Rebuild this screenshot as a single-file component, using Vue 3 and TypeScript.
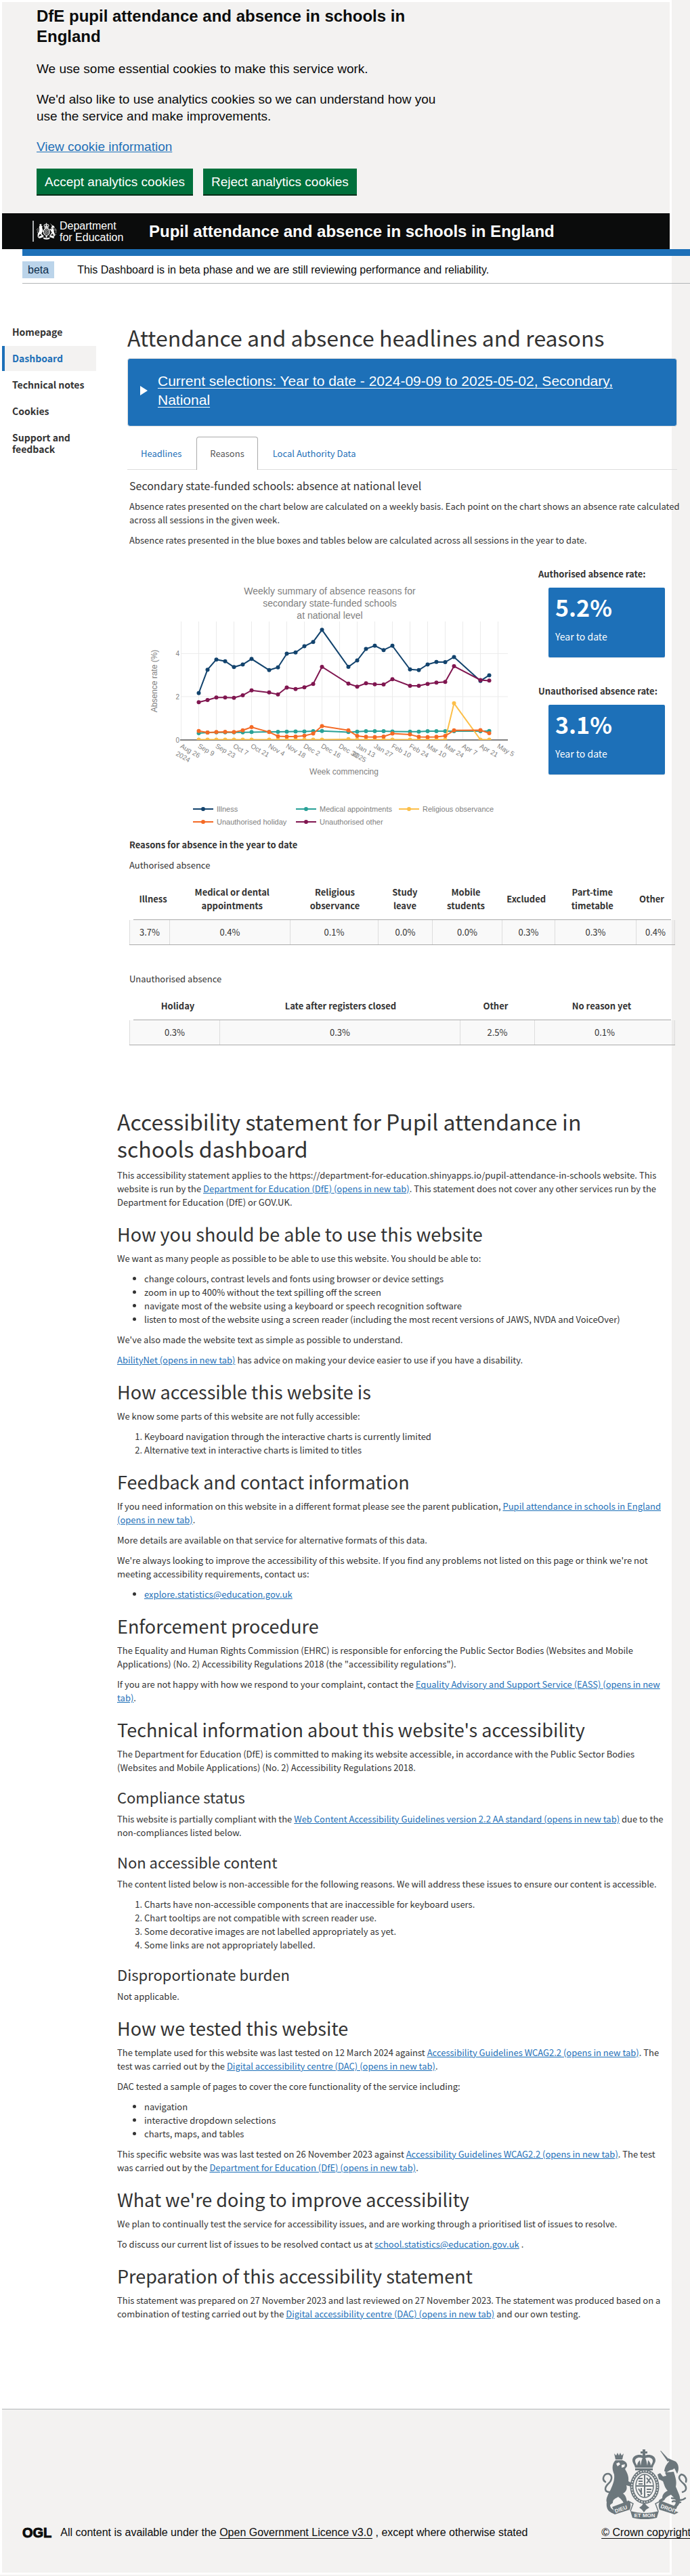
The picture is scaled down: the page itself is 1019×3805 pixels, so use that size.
<script setup lang="ts">
interface Series {
  name: string
  colour: string
  values: number[]
}

interface ReasonColumn {
  label: string
  value: string
}

const navItems = ['Homepage', 'Dashboard', 'Technical notes', 'Cookies', 'Support and feedback']

// Weeks counted from 26 August 2024; school holidays leave gaps.
const weeks = [2, 3, 4, 5, 6, 7, 8, 10, 11, 12, 13, 14, 15, 16, 19, 20, 21, 22, 23, 24, 26, 27, 28, 29, 30, 31, 34, 35]

const illness: Series = {
  name: 'Illness',
  colour: '#12436d',
  values: [2.16, 3.25, 3.72, 3.64, 3.37, 3.49, 3.75, 3.23, 3.36, 3.99, 4.05, 4.34, 4.54, 5.1, 3.38, 3.68, 4.21, 4.36, 4.16, 4.36, 3.26, 3.23, 3.49, 3.61, 3.6, 3.84, 2.73, 2.99],
}
const medical: Series = {
  name: 'Medical appointments',
  colour: '#28a197',
  values: [0.3, 0.33, 0.34, 0.34, 0.34, 0.34, 0.35, 0.36, 0.36, 0.37, 0.38, 0.38, 0.39, 0.4, 0.35, 0.37, 0.39, 0.39, 0.39, 0.38, 0.37, 0.37, 0.39, 0.39, 0.39, 0.39, 0.39, 0.4],
}
const religious: Series = {
  name: 'Religious observance',
  colour: '#fcbf49',
  values: [0, 0, 0, 0, 0, 0, 0, 0, 0, 0, 0, 0, 0, 0, 0.02, 0, 0, 0, 0, 0, 0, 0, 0, 0, 0, 1.69, 0, 0],
}
const holiday: Series = {
  name: 'Unauthorised holiday',
  colour: '#f46a25',
  values: [0.4, 0.33, 0.35, 0.36, 0.35, 0.43, 0.58, 0.35, 0.16, 0.14, 0.14, 0.18, 0.28, 0.63, 0.43, 0.17, 0.13, 0.12, 0.14, 0.28, 0.24, 0.13, 0.12, 0.13, 0.17, 0.43, 0.44, 0.3],
}
const other: Series = {
  name: 'Unauthorised other',
  colour: '#801650',
  values: [1.74, 1.84, 1.96, 1.96, 1.94, 2.06, 2.29, 2.19, 2.1, 2.42, 2.35, 2.43, 2.59, 3.38, 2.6, 2.46, 2.62, 2.57, 2.56, 2.81, 2.5, 2.5, 2.59, 2.65, 2.68, 3.41, 2.77, 2.74],
}
const series = [illness, medical, religious, holiday, other]

const ticks = ['Aug 26', 'Sep 9', 'Sep 23', 'Oct 7', 'Oct 21', 'Nov 4', 'Nov 18', 'Dec 2', 'Dec 16', 'Dec 30', 'Jan 13', 'Jan 27', 'Feb 10', 'Feb 24', 'Mar 10', 'Mar 24', 'Apr 7', 'Apr 21', 'May 5']
const tickYears: Record<string, string> = { 'Aug 26': '2024', 'Jan 13': '2025' }

const weekX = (week: number): number => 76.5 + week * 13
const rateY = (rate: number): number => 254.5 - rate * 31.8
const points = (s: Series): string => s.values.map((v, i) => `${weekX(weeks[i])},${rateY(v).toFixed(1)}`).join(' ')

const authorised: ReasonColumn[] = [
  { label: 'Illness', value: '3.7%' },
  { label: 'Medical or dental appointments', value: '0.4%' },
  { label: 'Religious observance', value: '0.1%' },
  { label: 'Study leave', value: '0.0%' },
  { label: 'Mobile students', value: '0.0%' },
  { label: 'Excluded', value: '0.3%' },
  { label: 'Part-time timetable', value: '0.3%' },
  { label: 'Other', value: '0.4%' },
]
const unauthorised: ReasonColumn[] = [
  { label: 'Holiday', value: '0.3%' },
  { label: 'Late after registers closed', value: '0.3%' },
  { label: 'Other', value: '2.5%' },
  { label: 'No reason yet', value: '0.1%' },
]
</script>

<template>
  <div class="page">
    <svg class="defs" aria-hidden="true">
      <symbol id="crest" viewBox="0 0 128 103">
        <g fill="currentColor" stroke="none">
          <!-- crown -->
          <path d="M60 0h4v3h3v3h-3v4h-4V6h-3V3h3z" />
          <path d="M62 10c5-4 17-2 17 6 0 4-3 6-4 11H49c-1-5-4-7-4-11 0-8 12-10 17-6zm-2 3c-4-2-11-1-11 4 0 3 2 5 3 7 0-4 2-6 4-8l1 8c1-4 1-8 3-11zm4 0c2 3 2 7 3 11l1-8c2 2 4 4 4 8 1-2 3-4 3-7 0-5-7-6-11-4z" fill-rule="evenodd" />
          <path d="M49 28h26v3H49z" />
          <!-- lion -->
          <path d="M18 6l3 3 2-4 2 4 2-4 2 4 3-3-2 9H20z" />
          <path d="M20 16h10c4 1 8 4 7 9l-3 4c3 5 6 11 5 18l5 3-1 5-7-2c2 6-1 10-5 12 4 3 5 7 6 12l5 1-1 4h-8c-2-6-5-9-9-12-4 3-8 3-8 9l-4 3c0 5 4 7 6 8l-2 4c-8-2-10-9-9-16-2-5 3-13 6-19 3-7 6-14 5-22-3-7-4-15 2-21z" />
          <path d="M21 21l4-2 2 3-4 3zm8 2l5-1-1 4-4 1z" class="crest-gap" />
          <!-- unicorn -->
          <path d="M86 2l1 0 13 14-3 2z" />
          <path d="M98 13l4 2 7 3c5 5 5 12 2 18l-4-8-3 2-4 1-5 3-3-2c1-7 4-11 7-14zM93 34l13-1c2 7 5 14 3 22l5 12c3 8 1 18-9 21l-1-3c5-3 6-7 4-12l-6-6c-5 2-8 4-10 8l-7 4-1-4 5-3c0-6 4-9 8-11-4-4-5-9-7-14l-6-3-2-7 4-2 4 5 5-1z" />
        </g>
        <g fill="none" stroke="currentColor" stroke-width="2.5" stroke-linecap="round">
          <path d="M5 48c-6-4-2-13 5-12 7 3 4 11-1 15-6 6-5 12 2 12M11 64c5-3 9-1 8 4" />
          <path d="M119 63c7-2 6-8 2-12-6-5-10-10-4-14M117 37c4 0 9 5 7 11M103 72l7 1M110 70c3 6 8 6 13 2M104 77c5-3 7 4 12 1" />
        </g>
        <g fill="none" stroke="currentColor">
          <ellipse cx="63" cy="55" rx="19" ry="23" stroke-width="5" />
          <ellipse cx="63" cy="55" rx="19" ry="23" stroke-width="1.6" stroke-dasharray="2 2" class="crest-line" />
          <ellipse cx="63" cy="54" rx="13" ry="17" stroke-width="1.5" />
          <path d="M63 37v34M50 54h26M54 43l6 0M54 47h6M54 51h6M66 42l6 8M72 42l-6 8M54 58l5 8M58 57v10M66 59h7M66 63h6M67 67h3" stroke-width="2" />
        </g>
        <g fill="currentColor">
          <path d="M15 85l24-9c4 3 4 8 2 13l-22 7-6-3 5-2z" />
          <path d="M111 85l-24-9c-4 3-4 8-2 13l22 7 6-3-5-2z" />
          <path d="M42 91c14 4 28 4 42 0l-3 10c-12 3-24 3-36 0z" />
          <path d="M62 78l4 5 4 3-5 3-3 4-3-4-4-3 4-3z" />
          <path d="M38 76l8 4-4 11M87 76l-8 4 4 11" fill="none" stroke="currentColor" stroke-width="1.5" />
        </g>
      </symbol>
    </svg>

    <section class="cookies" aria-label="Cookies">
      <div class="cookies-text">
        <h2>DfE pupil attendance and absence in schools in England</h2>
        <p>We use some essential cookies to make this service work.</p>
        <p>We'd also like to use analytics cookies so we can understand how you use the service and make improvements.</p>
        <p><a href="#cookies">View cookie information</a></p>
      </div>
      <div class="cookies-actions">
        <button type="button">Accept analytics cookies</button>
        <button type="button">Reject analytics cookies</button>
      </div>
    </section>

    <header class="masthead">
      <a class="logo" href="#home">
        <svg class="logo-crest" aria-hidden="true"><use href="#crest" /></svg>
        <span>Department<br>for Education</span>
      </a>
      <span class="service">Pupil attendance and absence in schools in England</span>
    </header>

    <div class="phase">
      <strong>beta</strong>
      <span>This Dashboard is in beta phase and we are still reviewing performance and reliability.</span>
    </div>

    <div class="layout">
      <nav class="sidebar" aria-label="Sections">
        <a v-for="item in navItems" :key="item" href="#" :class="{ current: item === 'Dashboard' }">{{ item }}</a>
      </nav>

      <main class="dashboard">
        <h1>Attendance and absence headlines and reasons</h1>
        <details class="selections">
          <summary>
            <svg width="11" height="14" viewBox="0 0 11 14" aria-hidden="true"><path d="M0 0l11 7-11 7z" fill="#fff" /></svg>
            <span>Current selections: Year to date - 2024-09-09 to 2025-05-02, Secondary, National</span>
          </summary>
        </details>

        <div class="tabs">
          <a href="#headlines">Headlines</a>
          <a href="#reasons" class="active">Reasons</a>
          <a href="#la">Local Authority Data</a>
        </div>

        <div class="panel">
          <h4>Secondary state-funded schools: absence at national level</h4>
          <p>Absence rates presented on the chart below are calculated on a weekly basis. Each point on the chart shows an absence rate calculated across all sessions in the given week.</p>
          <p>Absence rates presented in the blue boxes and tables below are calculated across all sessions in the year to date.</p>

          <div class="summary-row">
            <svg class="chart" width="600" height="390" viewBox="0 0 600 390" role="img" aria-label="Weekly summary of absence reasons">
              <defs>
                <clipPath id="plot"><rect x="70" y="80" width="495" height="175" /></clipPath>
              </defs>
              <g class="chart-title" text-anchor="middle">
                <text x="296" y="40">Weekly summary of absence reasons for</text>
                <text x="296" y="58">secondary state-funded schools</text>
                <text x="296" y="76">at national level</text>
              </g>
              <g class="gridlines">
                <line v-for="(t, i) in ticks" :key="t" :x1="weekX(i * 2)" :x2="weekX(i * 2)" y1="80" y2="254" />
                <line v-for="r in [2, 4]" :key="r" x1="76" x2="559" :y1="rateY(r) + 0.1" :y2="rateY(r) + 0.1" />
              </g>
              <line x1="75" x2="559" y1="255" y2="255" stroke="#808080" stroke-width="2" />
              <g clip-path="url(#plot)">
                <g v-for="s in series" :key="s.name" :fill="s.colour">
                  <polyline :points="points(s)" fill="none" :stroke="s.colour" stroke-width="2" />
                  <circle v-for="(v, i) in s.values" :key="i" :cx="weekX(weeks[i])" :cy="rateY(v)" r="3" />
                </g>
              </g>
              <g class="ticks">
                <text v-for="r in [0, 2, 4]" :key="r" x="74" :y="rateY(r) + 4" text-anchor="end">{{ r }}</text>
                <g v-for="(t, i) in ticks" :key="t" :transform="`translate(${weekX(i * 2) - 2} 266) rotate(30)`">
                  <text>{{ t }}</text>
                  <text v-if="tickYears[t]" y="13">{{ tickYears[t] }}</text>
                </g>
              </g>
              <g class="axis-titles" text-anchor="middle">
                <text x="317" y="306">Week commencing</text>
                <text transform="translate(41 168) rotate(-90)">Absence rate (%)</text>
              </g>
              <g v-for="(s, i) in series" :key="s.name" class="legend" :transform="`translate(${94 + (i % 3) * 152} ${357 + Math.floor(i / 3) * 19})`">
                <line x1="0" x2="30" y1="0" y2="0" :stroke="s.colour" stroke-width="2" />
                <circle cx="15" cy="0" r="3" :fill="s.colour" />
                <text x="35" y="4">{{ s.name }}</text>
              </g>
            </svg>

            <div class="rates">
              <h5>Authorised absence rate:</h5>
              <div class="value-box"><strong>5.2%</strong><span>Year to date</span></div>
              <h5>Unauthorised absence rate:</h5>
              <div class="value-box"><strong>3.1%</strong><span>Year to date</span></div>
            </div>
          </div>

          <h5>Reasons for absence in the year to date</h5>
          <p>Authorised absence</p>
          <table class="reasons authorised">
            <thead>
              <tr><th v-for="c in authorised" :key="c.label" scope="col">{{ c.label }}</th></tr>
            </thead>
            <tbody>
              <tr><td v-for="c in authorised" :key="c.label">{{ c.value }}</td></tr>
            </tbody>
          </table>
          <p>Unauthorised absence</p>
          <table class="reasons unauthorised">
            <thead>
              <tr><th v-for="c in unauthorised" :key="c.label" scope="col">{{ c.label }}</th></tr>
            </thead>
            <tbody>
              <tr><td v-for="c in unauthorised" :key="c.label">{{ c.value }}</td></tr>
            </tbody>
          </table>
        </div>
      </main>
    </div>

    <article class="statement">
      <h1>Accessibility statement for Pupil attendance in schools dashboard</h1>
      <p>This accessibility statement applies to the https://department-for-education.shinyapps.io/pupil-attendance-in-schools website. This website is run by the <a href="#">Department for Education (DfE) (opens in new tab)</a>. This statement does not cover any other services run by the Department for Education (DfE) or GOV.UK.</p>
      <h2>How you should be able to use this website</h2>
      <p>We want as many people as possible to be able to use this website. You should be able to:</p>
      <ul>
        <li>change colours, contrast levels and fonts using browser or device settings</li>
        <li>zoom in up to 400% without the text spilling off the screen</li>
        <li>navigate most of the website using a keyboard or speech recognition software</li>
        <li>listen to most of the website using a screen reader (including the most recent versions of JAWS, NVDA and VoiceOver)</li>
      </ul>
      <p>We've also made the website text as simple as possible to understand.</p>
      <p><a href="#">AbilityNet (opens in new tab)</a> has advice on making your device easier to use if you have a disability.</p>
      <h2>How accessible this website is</h2>
      <p>We know some parts of this website are not fully accessible:</p>
      <ol>
        <li>Keyboard navigation through the interactive charts is currently limited</li>
        <li>Alternative text in interactive charts is limited to titles</li>
      </ol>
      <h2>Feedback and contact information</h2>
      <p>If you need information on this website in a different format please see the parent publication, <a href="#">Pupil attendance in schools in England (opens in new tab)</a>.</p>
      <p>More details are available on that service for alternative formats of this data.</p>
      <p>We're always looking to improve the accessibility of this website. If you find any problems not listed on this page or think we're not meeting accessibility requirements, contact us:</p>
      <ul>
        <li><a href="#">explore.statistics@education.gov.uk</a></li>
      </ul>
      <h2>Enforcement procedure</h2>
      <p>The Equality and Human Rights Commission (EHRC) is responsible for enforcing the Public Sector Bodies (Websites and Mobile Applications) (No. 2) Accessibility Regulations 2018 (the "accessibility regulations").</p>
      <p>If you are not happy with how we respond to your complaint, contact the <a href="#">Equality Advisory and Support Service (EASS) (opens in new tab)</a>.</p>
      <h2>Technical information about this website's accessibility</h2>
      <p>The Department for Education (DfE) is committed to making its website accessible, in accordance with the Public Sector Bodies (Websites and Mobile Applications) (No. 2) Accessibility Regulations 2018.</p>
      <h3>Compliance status</h3>
      <p>This website is partially compliant with the <a href="#">Web Content Accessibility Guidelines version 2.2 AA standard (opens in new tab)</a> due to the non-compliances listed below.</p>
      <h3>Non accessible content</h3>
      <p>The content listed below is non-accessible for the following reasons. We will address these issues to ensure our content is accessible.</p>
      <ol>
        <li>Charts have non-accessible components that are inaccessible for keyboard users.</li>
        <li>Chart tooltips are not compatible with screen reader use.</li>
        <li>Some decorative images are not labelled appropriately as yet.</li>
        <li>Some links are not appropriately labelled.</li>
      </ol>
      <h3>Disproportionate burden</h3>
      <p>Not applicable.</p>
      <h2>How we tested this website</h2>
      <p>The template used for this website was last tested on 12 March 2024 against <a href="#">Accessibility Guidelines WCAG2.2 (opens in new tab)</a>. The test was carried out by the <a href="#">Digital accessibility centre (DAC) (opens in new tab)</a>.</p>
      <p>DAC tested a sample of pages to cover the core functionality of the service including:</p>
      <ul>
        <li>navigation</li>
        <li>interactive dropdown selections</li>
        <li>charts, maps, and tables</li>
      </ul>
      <p>This specific website was was last tested on 26 November 2023 against <a href="#">Accessibility Guidelines WCAG2.2 (opens in new tab)</a>. The test was carried out by the <a href="#">Department for Education (DfE) (opens in new tab)</a>.</p>
      <h2>What we're doing to improve accessibility</h2>
      <p>We plan to continually test the service for accessibility issues, and are working through a prioritised list of issues to resolve.</p>
      <p>To discuss our current list of issues to be resolved contact us at <a href="#">school.statistics@education.gov.uk</a> .</p>
      <h2>Preparation of this accessibility statement</h2>
      <p>This statement was prepared on 27 November 2023 and last reviewed on 27 November 2023. The statement was produced based on a combination of testing carried out by the <a href="#">Digital accessibility centre (DAC) (opens in new tab)</a> and our own testing.</p>
    </article>

    <footer class="footer">
      <div class="licence">
        <strong class="ogl">OGL</strong>
        <span>All content is available under the <a href="#">Open Government Licence v3.0</a> , except where otherwise stated</span>
      </div>
      <div class="copyright">
        <svg class="footer-crest" viewBox="0 0 128 103" aria-hidden="true">
          <use href="#crest" width="128" height="103" />
          <g class="crest-text">
            <text x="63" y="100" text-anchor="middle">ET MON</text>
            <text transform="translate(20 94) rotate(-20)">DIEU</text>
            <text transform="translate(86 86) rotate(20)">DROIT</text>
          </g>
        </svg>
        <a href="#">© Crown copyright</a>
      </div>
    </footer>
  </div>
</template>

<style>
html {
  background: #f3f2f1;
}
body {
  margin: 0;
  overflow-x: hidden;
}
</style>

<style scoped>
.page {
  --sans: "Noto Sans CJK SC", "Noto Sans", sans-serif;
  --arial: "Liberation Sans", Arial, sans-serif;
  margin-right: 27px;
  padding: 3px;
  background: #fff;
  color: #333;
  font: 13px/20px var(--sans);
}
.defs {
  position: absolute;
  width: 0;
  height: 0;
}
a {
  color: #1d70b8;
}
h1, h2, h3, h4, h5, p, ul, ol {
  margin: 0;
  font-weight: 400;
}

.cookies {
  padding: 6px 51px 26px;
  background: #f3f2f1;
  color: #0b0c0c;
  font: 19px/25px var(--arial);
}
.cookies-text {
  width: 68%;
}
.cookies h2 {
  font-size: 24px;
  line-height: 30px;
  font-weight: 700;
}
.cookies p {
  margin-top: 20px;
}
.cookies-actions {
  display: flex;
  gap: 15px;
  margin-top: 20px;
}
.cookies-actions button {
  height: 38px;
  margin: 0 0 2px;
  padding: 0 12px;
  border: 0;
  background: #00703c;
  box-shadow: 0 2px 0 #002d18;
  color: #fff;
  font: 19px/19px var(--arial);
}

.masthead {
  display: flex;
  align-items: center;
  min-height: 53px;
  background: #0b0c0c;
  color: #fff;
  font-family: var(--arial);
}
.logo {
  display: flex;
  align-items: center;
  gap: 4px;
  width: 172px;
  box-sizing: border-box;
  margin-left: 45px;
  color: #fff;
  font-size: 16px;
  line-height: 17px;
  text-decoration: none;
}
.logo-crest {
  width: 30px;
  height: 31px;
  padding-left: 4px;
  border-left: 2px solid #b1b4b6;
}
.service {
  font-size: 24px;
  line-height: 30px;
  font-weight: 700;
}

.phase {
  display: flex;
  align-items: center;
  gap: 34px;
  margin: 0 -30px 0 30px;
  padding: 8px 0 7px;
  border-top: 10px solid #1d70b8;
  border-bottom: 1px solid #b1b4b6;
  color: #0b0c0c;
  font: 16px/25px var(--arial);
}
.phase strong {
  padding: 0 8px;
  background: #bbd4ea;
  color: #0c2d4a;
  font-weight: 400;
}

.layout {
  display: flex;
  align-items: flex-start;
  margin-right: -11px;
}
.sidebar {
  display: flex;
  flex: 0 0 139px;
  flex-direction: column;
  gap: 2px;
  padding-top: 53px;
}
.sidebar a {
  padding: 10px 14px 10px 11px;
  border-left: 4px solid transparent;
  color: #333;
  font-size: 14px;
  line-height: 17px;
  font-weight: 700;
  text-decoration: none;
}
.sidebar .current {
  border-color: #1d70b8;
  background: #f3f2f1;
  color: #1d70b8;
}

.dashboard {
  flex: 1;
  min-width: 0;
  margin-left: 46px;
  padding-top: 59px;
}
.dashboard h1, .statement h1 {
  font-size: 32px;
  line-height: 40px;
}
.selections {
  margin-top: 11px;
  padding: 19px 19px 24px 18px;
  border: 1px solid #ddd;
  border-radius: 4px;
  background: #1d70b8;
}
.selections summary {
  display: flex;
  align-items: center;
  gap: 15px;
  color: #fff;
  font: 21px/28px var(--arial);
  text-decoration: underline;
  text-underline-offset: 3px;
  text-decoration-thickness: 1px;
  list-style: none;
}
.selections svg {
  flex: none;
}

.tabs {
  display: flex;
  gap: 2px;
  margin-top: 15px;
  border-bottom: 1px solid #ddd;
}
.tabs a {
  margin-bottom: -1px;
  padding: 14px 19px;
  border: 1px solid transparent;
  border-bottom: 0;
  text-decoration: none;
}
.tabs .active {
  border-color: #aaa;
  border-radius: 4px 4px 0 0;
  background: #fff;
  color: #555;
}

.panel {
  padding: 13px 3px 0;
}
.panel h4 {
  margin-bottom: 11px;
  font-size: 16px;
  line-height: 20px;
}
.panel h5 {
  font-size: 13px;
  line-height: 20px;
  font-weight: 700;
}
.panel p {
  margin: 0 -12px 10px 0;
}
.panel > h5 {
  margin: 10px 0;
}
.summary-row {
  display: grid;
  grid-template-columns: minmax(0, 1fr) 187px;
  margin-top: 30px;
  padding-right: 15px;
}
.chart {
  display: block;
  font-family: var(--arial);
}
.chart text {
  fill: #808080;
}
.chart-title {
  font-size: 14px;
}
.axis-titles {
  font-size: 12px;
}
.ticks {
  font-size: 10px;
}
.legend {
  font-size: 11px;
}
.gridlines line {
  stroke: #ebebeb;
}
.rates .value-box {
  display: flex;
  flex-direction: column;
  gap: 12px;
  margin: 10px 0 40px 15px;
  padding: 8px 10px 21px;
  border-radius: 2px;
  background: #1d70b8;
  color: #fff;
  box-shadow: 0 1px 1px rgba(0, 0, 0, 0.1);
}
.rates .value-box:last-child {
  margin-bottom: 0;
}
.value-box strong {
  font-size: 34px;
  line-height: 42px;
}
.value-box span {
  font-size: 14px;
  line-height: 20px;
}

/* The header row is inset from the body row by 6px on each side. */
.reasons {
  display: block;
  margin-bottom: 40px;
}
.reasons thead, .reasons tbody {
  display: block;
}
.reasons thead {
  margin: 0 6px;
  border-bottom: 1px solid #aaa;
}
.reasons tbody {
  border-bottom: 1px solid #aaa;
  background: rgba(0, 0, 0, 0.024);
}
.reasons tr {
  display: grid;
  align-items: center;
}
.authorised tr {
  grid-template-columns: 59fr 178fr 130fr 80fr 103fr 78fr 120fr 58fr;
}
.unauthorised tr {
  grid-template-columns: 133fr 355fr 110fr 208fr;
}
.reasons th {
  padding: 10px 2px;
  font-weight: 700;
}
.authorised th:nth-child(2) {
  padding: 10px 24px;
}
.authorised th:nth-child(3), .authorised th:nth-child(7) {
  padding: 10px 20px;
}
.authorised th:nth-child(4), .authorised th:nth-child(5) {
  padding: 10px 16px;
}
.reasons td {
  padding: 8px 0;
  border-left: 1px solid #ddd;
  text-align: center;
}
.reasons td:last-child {
  border-right: 1px solid #ddd;
}

.statement {
  margin: 52px 8px 0 170px;
  padding-bottom: 120px;
}
.statement h1, .statement p, .statement ul, .statement ol {
  margin-bottom: 10px;
}
.statement h1 {
  padding-right: 40px;
}
.statement h2 {
  margin: 20px 0 10px;
  font-size: 27px;
  line-height: 33px;
}
.statement h3 {
  margin: 20px 0 10px;
  font-size: 22px;
  line-height: 26px;
}
.statement ul, .statement ol {
  padding-left: 40px;
}

.footer {
  display: flex;
  align-items: flex-end;
  justify-content: space-between;
  padding: 59px 0 49px 30px;
  border-top: 1px solid #b1b4b6;
  background: #f3f2f1;
  color: #0b0c0c;
  font: 16px/20px var(--arial);
}
.footer a {
  color: #0b0c0c;
  text-underline-offset: 3px;
}
.licence {
  display: flex;
  align-items: center;
  gap: 13px;
}
.ogl {
  font-size: 20px;
  -webkit-text-stroke: 1px #0b0c0c;
}
.copyright {
  display: flex;
  flex-direction: column;
  flex: none;
  margin-right: -31px;
  gap: 10px;
  white-space: nowrap;
}
.footer-crest {
  width: 128px;
  height: 103px;
  margin-left: 1px;
  color: #6c777c;
}
.crest-gap {
  fill: #f3f2f1;
}
.crest-line {
  stroke: #f3f2f1;
}
.crest-text {
  fill: #f3f2f1;
  font: 700 8px var(--arial);
}
</style>
